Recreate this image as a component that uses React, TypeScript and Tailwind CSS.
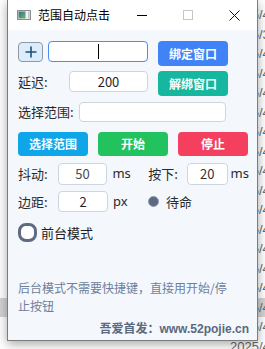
import React from "react";

const bgRows = Array.from({ length: 18 }, (_, i) => i);

function TitleIcon() {
  return (
    <svg width="14" height="10" viewBox="0 0 14 10">
      <defs>
        <linearGradient id="tg" x1="0" y1="0" x2="1" y2="1">
          <stop offset="0" stopColor="#2f6f88" />
          <stop offset="1" stopColor="#74b86a" />
        </linearGradient>
      </defs>
      <rect x="0.5" y="0.5" width="13" height="9" fill="#e8e8e8" stroke="#8d8d8d" />
      <rect x="1.5" y="1.5" width="7" height="7" fill="url(#tg)" />
      <rect x="9.5" y="1.5" width="1" height="7" fill="#ffffff" />
      <rect x="11" y="1.5" width="1.5" height="7" fill="#b9c6c9" />
    </svg>
  );
}

export default function App() {
  return (
    <div className="relative w-[265px] h-[349px] overflow-hidden bg-white font-['Noto_Sans_CJK_SC',sans-serif]">
      {/* desktop / background list */}
      <div className="flex flex-col pt-[5px]">
        {bgRows.map((i) => (
          <div
            key={i}
            className={
              "h-[19.5px] flex items-center pl-[230px] font-['Liberation_Sans',sans-serif] text-[13px] text-[#6a6a6a] whitespace-nowrap " +
              (i === 15 ? "bg-[#d4d4d4]" : "")
            }
          >
            {i === 1 ? "2025/3/12 9:41" : "2025/4/18 17:22"}
          </div>
        ))}
      </div>

      {/* window */}
      <div className="absolute left-[7px] top-0 w-[251px] h-[341px] border-x border-b border-[#7c7c7c] bg-[#f4f7fc] shadow-[0_3px_10px_rgba(0,0,0,0.35)] flex flex-col">
        {/* title bar */}
        <div className="h-[30px] bg-white flex items-center shrink-0">
          <div className="pl-[9px] flex items-center">
            <TitleIcon />
          </div>
          <div className="ml-[7px] text-[12px] leading-none text-black">范围自动点击</div>
          <div className="ml-auto flex h-full">
            <div className="w-[46px] h-full flex items-center justify-center">
              <div className="w-[10px] h-px bg-black" />
            </div>
            <div className="w-[46px] h-full flex items-center justify-center">
              <div className="w-[10px] h-[10px] border border-[#c6c6c6]" />
            </div>
            <div className="w-[46px] h-full flex items-center justify-center">
              <svg width="11" height="11" viewBox="0 0 11 11">
                <path d="M0.5 0.5 L10.5 10.5 M10.5 0.5 L0.5 10.5" stroke="#111" strokeWidth="1" />
              </svg>
            </div>
          </div>
        </div>

        {/* content */}
        <div className="flex flex-col pl-[10px] pr-[8px] pt-[11px] text-[13px] text-[#2a2a2a]">
          {/* row 1 */}
          <div className="flex items-start">
            <div className="mt-[1px] w-[25px] h-[20px] rounded-[4px] border border-[#8e9aa6] bg-[#dcecfb] flex items-center justify-center">
              <svg width="12" height="12" viewBox="0 0 12 12">
                <path d="M6 0.5 V11.5 M0.5 6 H11.5" stroke="#1d4f78" strokeWidth="1.6" />
              </svg>
            </div>
            <div className="ml-[5px] w-[100px] h-[21px] rounded-[4px] border border-[#4b8cf2] bg-white flex items-center justify-center">
              <div className="w-px h-[15px] bg-black" />
            </div>
            <div className="ml-[10px] w-[70px] h-[25px] rounded-[4px] bg-[#3f83f6] text-white font-bold text-[12px] flex items-center justify-center">
              绑定窗口
            </div>
          </div>

          {/* row 2 */}
          <div className="mt-[5px] flex items-start">
            <div className="w-[51px] h-[21px] flex items-center">延迟:</div>
            <div className="w-[79px] h-[21px] rounded-[4px] border border-[#cdd5e0] bg-white flex items-center justify-center text-[13px] text-[#1e1e1e]">
              200
            </div>
            <div className="ml-[10px] w-[70px] h-[25px] rounded-[4px] bg-[#15b79e] text-white font-bold text-[12px] flex items-center justify-center">
              解绑窗口
            </div>
          </div>

          {/* row 3 */}
          <div className="mt-[6px] flex items-center">
            <div className="w-[61px] h-[20px] flex items-center">选择范围:</div>
            <div className="w-[147px] h-[20px] rounded-[4px] border border-[#cdd5e0] bg-white" />
          </div>

          {/* buttons */}
          <div className="mt-[10px] flex gap-[10px]">
            <div className="w-[70px] h-[24px] rounded-[4px] bg-[#0ea5e9] text-white font-bold text-[12px] flex items-center justify-center">
              选择范围
            </div>
            <div className="w-[70px] h-[24px] rounded-[4px] bg-[#22c35e] text-white font-bold text-[12px] flex items-center justify-center">
              开始
            </div>
            <div className="w-[70px] h-[24px] rounded-[4px] bg-[#f43f5e] text-white font-bold text-[12px] flex items-center justify-center">
              停止
            </div>
          </div>

          {/* row 5 */}
          <div className="mt-[7px] flex items-center h-[22px]">
            <div className="w-[40px]">抖动:</div>
            <div className="w-[50px] h-[22px] rounded-[4px] border border-[#cdd5e0] bg-white flex items-center justify-center text-[#4a4a4a]">
              50
            </div>
            <div className="w-[41px] pl-[5px] font-['Noto_Sans',sans-serif]">ms</div>
            <div className="w-[39px]">按下:</div>
            <div className="w-[41px] h-[22px] rounded-[4px] border border-[#cdd5e0] bg-white flex items-center justify-center text-[#333]">
              20
            </div>
            <div className="pl-[3px] font-['Noto_Sans',sans-serif]">ms</div>
          </div>

          {/* row 6 */}
          <div className="mt-[6px] flex items-center h-[21px]">
            <div className="w-[40px]">边距:</div>
            <div className="w-[50px] h-[21px] rounded-[4px] border border-[#cdd5e0] bg-white flex items-center justify-center text-[#1e1e1e]">
              2
            </div>
            <div className="w-[40px] pl-[5px] font-['Noto_Sans',sans-serif]">px</div>
            <div className="w-[11px] h-[11px] rounded-full bg-[#5d6980] border border-[#8f9bb0]" />
            <div className="ml-[7px]">待命</div>
          </div>

          {/* toggle */}
          <div className="mt-[11px] flex items-center">
            <div className="w-[19px] h-[19px] rounded-[8px] border-[3px] border-[#5f6b82] bg-white" />
            <div className="ml-[4px] text-[#222]">前台模式</div>
          </div>

          {/* hint */}
          <div className="mt-[36px] text-[12px] leading-[18px] text-[#6e7f9a] pr-[16px]">
            后台模式不需要快捷键，直接用开始/停止按钮
          </div>

          {/* footer */}
          <div className="mt-[4px] text-right text-[12px] leading-[18px] font-bold text-[#5b6980]">
            吾爱首发：<span className="font-['Liberation_Sans',sans-serif]">www.52pojie.cn</span>
          </div>
        </div>
      </div>
    </div>
  );
}
